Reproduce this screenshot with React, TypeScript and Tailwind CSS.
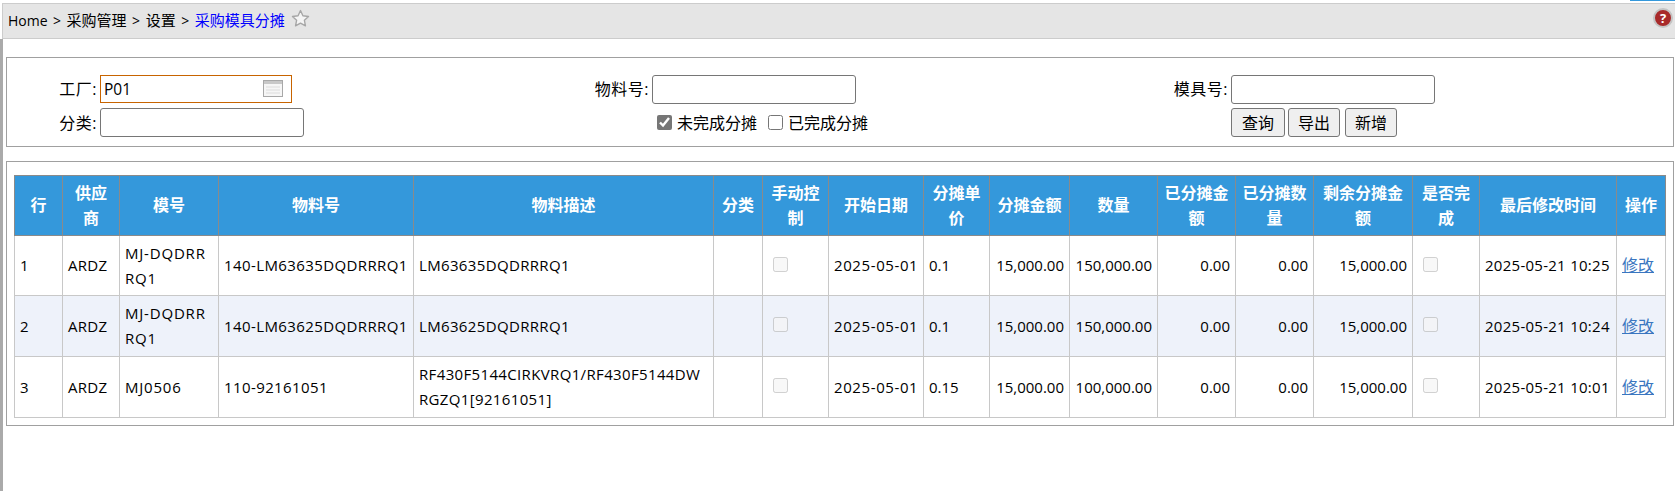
import { ReactNode } from 'react';

const FONT = "font-['Open_Sans','Noto_Sans_CJK_SC',sans-serif]";

const headers = [
  { label: '行', width: 'w-[48px]' },
  { label: '供应商', width: 'w-[57px]' },
  { label: '模号', width: 'w-[99px]' },
  { label: '物料号', width: 'w-[195px]' },
  { label: '物料描述', width: 'w-[300px]' },
  { label: '分类', width: 'w-[49px]' },
  { label: '手动控制', width: 'w-[66px]' },
  { label: '开始日期', width: 'w-[95px]' },
  { label: '分摊单价', width: 'w-[66px]' },
  { label: '分摊金额', width: 'w-[80px]' },
  { label: '数量', width: 'w-[88px]' },
  { label: '已分摊金额', width: 'w-[78px]' },
  { label: '已分摊数量', width: 'w-[78px]' },
  { label: '剩余分摊金额', width: 'w-[99px]' },
  { label: '是否完成', width: 'w-[67px]' },
  { label: '最后修改时间', width: 'w-[137px]' },
  { label: '操作', width: 'w-[49px]' },
];

const rows = [
  {
    no: '1',
    height: 'h-[60px]',
    mold: ['MJ-DQDRR', 'RQ1'],
    material: '140-LM63635DQDRRRQ1',
    desc: ['LM63635DQDRRRQ1'],
    price: '0.1',
    qty: '150,000.00',
    modified: '2025-05-21 10:25',
  },
  {
    no: '2',
    height: 'h-[61px]',
    mold: ['MJ-DQDRR', 'RQ1'],
    material: '140-LM63625DQDRRRQ1',
    desc: ['LM63625DQDRRRQ1'],
    price: '0.1',
    qty: '150,000.00',
    modified: '2025-05-21 10:24',
  },
  {
    no: '3',
    height: 'h-[61px]',
    mold: ['MJ0506'],
    material: '110-92161051',
    desc: ['RF430F5144CIRKVRQ1/RF430F5144DW', 'RGZQ1[92161051]'],
    price: '0.15',
    qty: '100,000.00',
    modified: '2025-05-21 10:01',
  },
];

function Cell({ children, right, className }: { children?: ReactNode; right?: boolean; className?: string }) {
  return (
    <td
      className={`border border-[#c8c8c8] px-[5px] whitespace-nowrap ${right ? 'text-right' : 'text-left'} ${className ?? ''}`}
    >
      {children}
    </td>
  );
}

function Lines({ lines }: { lines: string[] }) {
  return (
    <>
      {lines.map((line) => (
        <div key={line}>{line}</div>
      ))}
    </>
  );
}

function DisabledBox() {
  return <input type="checkbox" disabled className="block ml-[5px] mb-[3px] w-[15px] h-[15px]" />;
}

function Sep() {
  return <span className="mx-[5.5px] text-[14px]">&gt;</span>;
}

function CalendarIcon() {
  return (
    <svg width="20" height="17" viewBox="0 0 20 17" className="absolute right-[9px] top-[5px]">
      <rect x="0.5" y="0.5" width="19" height="16" fill="#f6f6f6" stroke="#a8a8a8" />
      <rect x="1" y="1" width="18" height="3" fill="#c8c8c8" />
      <path d="M3 7h14M3 10h14M3 13h14" stroke="#dcdcdc" fill="none" />
    </svg>
  );
}

function TextInput({ className }: { className?: string }) {
  return (
    <input
      type="text"
      readOnly
      className={`w-[204px] h-[29px] border border-[#767676] rounded-[3px] bg-white ${className ?? ''}`}
    />
  );
}

function Btn({ children, className }: { children: ReactNode; className: string }) {
  return (
    <button className={`h-[29px] border border-[#767676] rounded-[3px] bg-[#efefef] text-[16px] ${className}`}>
      {children}
    </button>
  );
}

export default function App() {
  return (
    <div className={`${FONT} h-[491px] w-[1675px] flex flex-col bg-white text-black overflow-hidden`}>
      {/* sliver of the tab above */}
      <div className="h-[3px] flex justify-end items-start">
        <div className="w-[45px] h-px bg-[#3498db]" />
      </div>

      {/* Breadcrumb */}
      <div className="h-[36px] ml-[2px] flex items-center justify-between bg-[#e5e5e5] border-t border-b border-l border-[#cccccc] pl-[5px] pr-[2px]">
        <div className="flex items-center text-[15px] mb-[2px]">
          <span className="text-[14px]">Home</span>
          <Sep />
          <span>采购管理</span>
          <Sep />
          <span>设置</span>
          <Sep />
          <span className="text-[#0000ff]">采购模具分摊</span>
          <svg width="19" height="19" viewBox="0 0 18 18" className="ml-[6px] mb-[3px]">
            <path
              d="M9 1.5l2.3 4.9 5.3.7-3.9 3.6 1 5.3L9 13.4l-4.7 2.6 1-5.3L1.4 7.1l5.3-.7z"
              fill="#f4f4f4"
              stroke="#a6a6a6"
              strokeWidth="1.3"
              strokeLinejoin="round"
            />
          </svg>
        </div>
        <div className="mb-[6px] w-[20px] h-[20px] rounded-full bg-[#a82a2a] border-2 border-[#c4c4c4] flex items-center justify-center text-white text-[13px] font-bold leading-none">
          ?
        </div>
      </div>

      <div className="flex-1 border-l-[3px] border-[#aaaaaa] pl-[3px] pr-px pt-[18px]">
        {/* Filters */}
        <div className="h-[90px] border border-[#a0a0a0] pt-[17px] text-[16px]">
          <div className="grid grid-cols-[93px_462px_90px_466px_113px_1fr] grid-rows-[28px_29px] gap-y-[5px] items-center">
            <div className="text-right pr-[3px] tracking-[0.5px]">工厂:</div>
            <div className="relative w-[192px]">
              <input
                type="text"
                readOnly
                value="P01"
                className="w-[192px] h-[28px] border border-[#c86400] bg-white pl-[3px] text-[15.5px] outline-none"
              />
              <CalendarIcon />
            </div>
            <div className="text-right pr-[3px] tracking-[0.5px]">物料号:</div>
            <TextInput />
            <div className="text-right pr-[3px] tracking-[0.5px]">模具号:</div>
            <TextInput />

            <div className="text-right pr-[3px] tracking-[0.5px]">分类:</div>
            <TextInput />
            <div />
            <div className="flex items-center pl-[5px]">
              <input type="checkbox" checked readOnly className="w-[15px] h-[15px] accent-[#767676]" />
              <span className="ml-[5px]">未完成分摊</span>
              <input type="checkbox" readOnly className="ml-[11px] w-[15px] h-[15px]" />
              <span className="ml-[5px]">已完成分摊</span>
            </div>
            <div />
            <div className="flex gap-[3px]">
              <Btn className="w-[54px]">查询</Btn>
              <Btn className="w-[52px] mr-[2px]">导出</Btn>
              <Btn className="w-[52px]">新增</Btn>
            </div>
          </div>
        </div>

        {/* Result table */}
        <div className="mt-[14px] h-[265px] border border-[#a0a0a0] pt-[13px] pl-[7px]">
          <table className="table-fixed border-collapse w-[1652px] text-[15px] leading-[25px]">
            <colgroup>
              {headers.map((h) => (
                <col key={h.label} className={h.width} />
              ))}
            </colgroup>
            <thead>
              <tr className="h-[60px] bg-[#3498db] text-white">
                {headers.map((h) => (
                  <th key={h.label} className="border border-[#8a8a8a] px-[5px] text-center text-[16px] font-bold">
                    {h.label}
                  </th>
                ))}
              </tr>
            </thead>
            <tbody>
              {rows.map((r, i) => (
                <tr key={r.no} className={`${r.height} ${i === 1 ? 'bg-[#eef2fa]' : 'bg-white'}`}>
                  <Cell>{r.no}</Cell>
                  <Cell className="tracking-[0.25px]">ARDZ</Cell>
                  <Cell className="tracking-[0.8px]">
                    <Lines lines={r.mold} />
                  </Cell>
                  <Cell className="tracking-[0.4px]">{r.material}</Cell>
                  <Cell className="tracking-[0.35px]">
                    <Lines lines={r.desc} />
                  </Cell>
                  <Cell />
                  <Cell>
                    <DisabledBox />
                  </Cell>
                  <Cell className="tracking-[0.6px]">2025-05-01</Cell>
                  <Cell>{r.price}</Cell>
                  <Cell right>15,000.00</Cell>
                  <Cell right>{r.qty}</Cell>
                  <Cell right>0.00</Cell>
                  <Cell right>0.00</Cell>
                  <Cell right>15,000.00</Cell>
                  <Cell>
                    <DisabledBox />
                  </Cell>
                  <Cell className="tracking-[0.27px]">{r.modified}</Cell>
                  <Cell>
                    <a href="#" className="text-[#3a76c0] underline text-[16px]">
                      修改
                    </a>
                  </Cell>
                </tr>
              ))}
            </tbody>
          </table>
        </div>
      </div>
    </div>
  );
}
